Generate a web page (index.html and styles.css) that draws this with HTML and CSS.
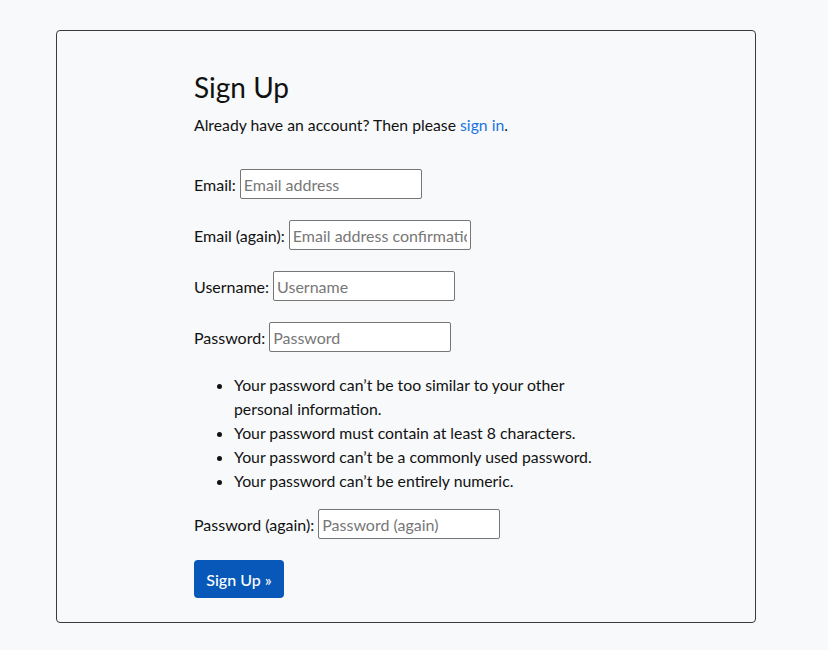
FILE: index.html
```html
<!DOCTYPE html>
<html>
<head>
<meta charset="utf-8">
<link rel="stylesheet" href="styles.css">
</head>
<body>
<div class="card">
  <div class="content">
    <h1 class="title">Sign Up</h1>
    <p class="intro">Already have an account? Then please <a href="#" class="link">sign in</a>.</p>
    <form class="form">
      <div class="row"><label class="label">Email:</label><input class="field" type="email" placeholder="Email address"></div>
      <div class="row"><label class="label">Email (again):</label><input class="field" type="email" placeholder="Email address confirmation"></div>
      <div class="row"><label class="label">Username:</label><input class="field" type="text" placeholder="Username"></div>
      <div class="row"><label class="label">Password:</label><input class="field" type="password" placeholder="Password"></div>
      <ul class="help">
        <li>Your password can’t be too similar to your other personal information.</li>
        <li>Your password must contain at least 8 characters.</li>
        <li>Your password can’t be a commonly used password.</li>
        <li>Your password can’t be entirely numeric.</li>
      </ul>
      <div class="row"><label class="label">Password (again):</label><input class="field" type="password" placeholder="Password (again)"></div>
      <button class="btn" type="button">Sign Up »</button>
    </form>
  </div>
</div>
</body>
</html>
```
FILE: styles.css
```css
html, body {
  margin: 0;
  padding: 0;
  background: #f8f9fa;
  font-family: Lato, "Open Sans", sans-serif;
  color: #212529;
  font-size: 16px;
}
.card {
  box-sizing: border-box;
  margin: 30px 0 0 56px;
  width: 700px;
  height: 593px;
  border: 1px solid #3a3a3a;
  border-radius: 4px;
  background: #f8f9fa;
}
.content {
  width: 410px;
  margin-left: 137px;
  padding-top: 38px;
}
.title {
  font-size: 28px;
  font-weight: 400;
  line-height: 36px;
  margin: 0 0 8px;
  color: #111;
}
.intro {
  margin: 0 0 32px;
  line-height: 24px;
  font-size: 15.75px;
  color: #111;
}
.link {
  color: #1a74e0;
  text-decoration: none;
}
.form {
  margin: 0;
}
.row {
  display: flex;
  align-items: center;
  gap: 4px;
  height: 30px;
  margin-bottom: 21px;
  color: #111;
}
.field {
  box-sizing: border-box;
  width: 182px;
  height: 30px;
  border: 1px solid #767676;
  border-radius: 2px;
  background: #fff;
  padding: 0 3px;
  font-family: Lato, sans-serif;
  font-size: 16px;
  color: #111;
}
.field::placeholder {
  color: #777;
}
.help {
  margin: 0 0 16px;
  padding-left: 40px;
  line-height: 24px;
  font-size: 15.8px;
  color: #111;
}
.btn {
  display: block;
  box-sizing: border-box;
  width: 90px;
  height: 38px;
  border: 0;
  border-radius: 4px;
  background: #0758b8;
  color: #fff;
  font-family: Lato, sans-serif;
  font-size: 16px;
  font-weight: 500;
  padding: 0;
}
```
